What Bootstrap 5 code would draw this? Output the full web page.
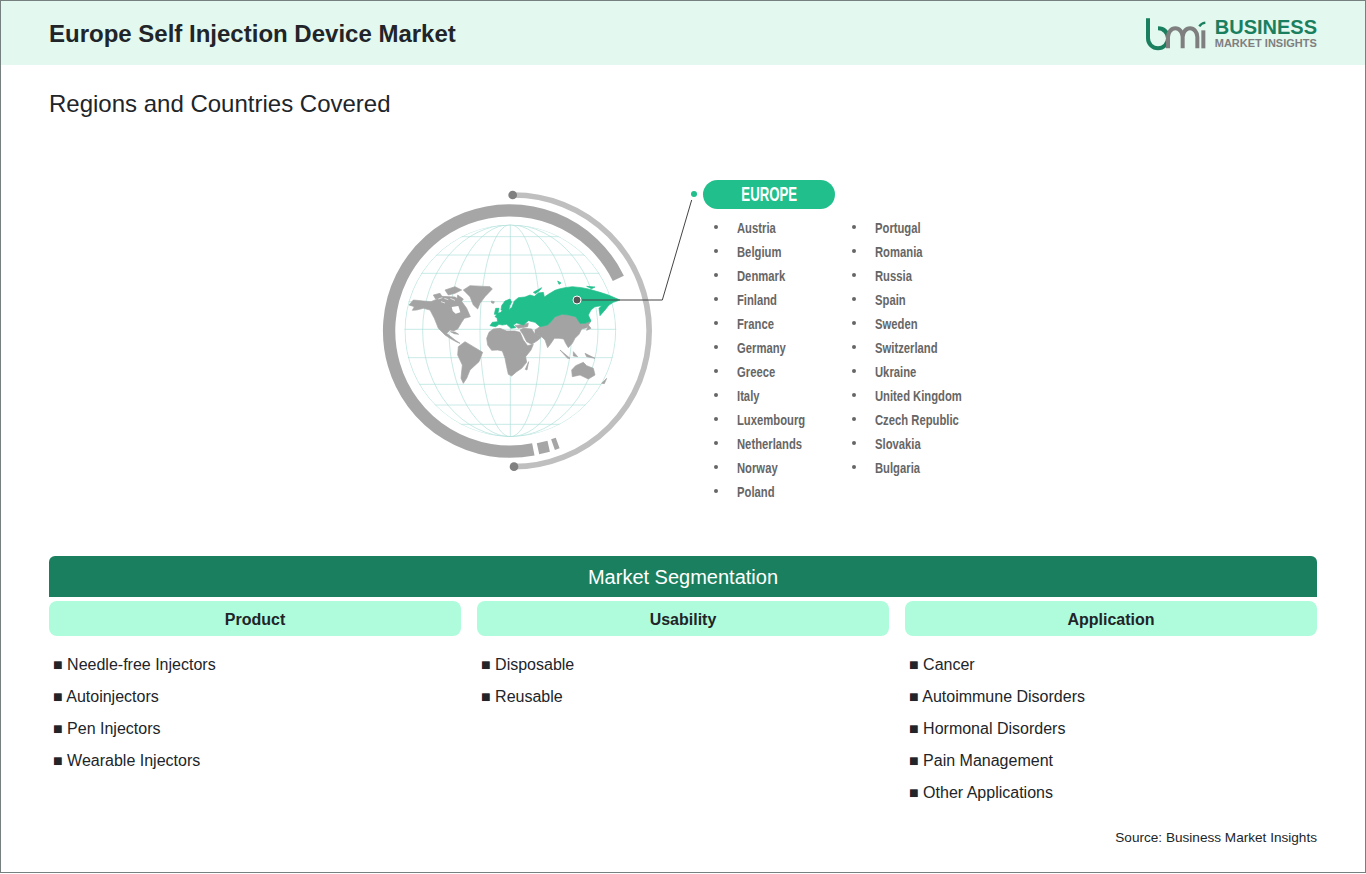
<!DOCTYPE html>
<html lang="en">
  <head>
    <meta charset="UTF-8" />
    <meta name="viewport" content="width=device-width, initial-scale=1.0" />
    <title>Europe Self Injection Device Market</title>
    <link href="https://cdn.jsdelivr.net/npm/bootstrap@5.3.3/dist/css/bootstrap.min.css" rel="stylesheet" />
    <script src="https://cdn.jsdelivr.net/npm/bootstrap@5.3.3/dist/js/bootstrap.bundle.min.js"></script>

    <style>
      body {
        margin: 0;
        font-family: "Liberation Sans", Arial, sans-serif;
        color: #212529;
        background: #fff;
      }
      .frame {
        width: 1366px;
        height: 873px;
        border: 1px solid #76807f;
        overflow: hidden;
      }
      .top-band {
        height: 64px;
        padding: 0 48px;
        background: #e3f8ef;
      }
      .top-band h1 {
        margin: 2px 0 0;
        font-size: 24px;
        font-weight: 700;
      }
      .bmi-mark {
        width: 70px;
        height: 45px;
        margin-right: 5px;
      }
      .bmi-name {
        font-size: 20px;
        line-height: 20px;
        font-weight: 700;
        color: #1a7f5e;
      }
      .bmi-sub {
        font-size: 11px;
        line-height: 12px;
        font-weight: 700;
        color: #7f7f7f;
      }
      .body-wrap {
        padding: 0 48px;
      }
      .region-title {
        margin: 24px 0 0;
        font-size: 24px;
        line-height: 29px;
        font-weight: 400;
      }
      .region-map {
        margin-top: 57px;
        padding-left: 321px;
        height: 381px;
      }
      .globe {
        width: 330px;
        height: 300px;
        margin-right: 3px;
      }
      .region-pill {
        width: 132px;
        height: 29px;
        margin-top: 5px;
        border-radius: 15px;
        background: #21bf8c;
        color: #fff;
        font-size: 20px;
        line-height: 29px;
        font-weight: 700;
        text-align: center;
      }
      .narrow-pill {
        display: inline-block;
        transform: scaleX(0.66);
      }
      .country-cols {
        margin-top: 7px;
      }
      .country-col {
        width: 138px;
        margin: 0;
        padding: 0;
        list-style: none;
      }
      .country-col li {
        position: relative;
        height: 24px;
        padding-left: 33.5px;
        font-size: 15px;
        line-height: 23px;
        font-weight: 700;
        color: #666;
        white-space: nowrap;
      }
      .country-col li span {
        display: inline-block;
        transform: scaleX(0.75);
        transform-origin: left center;
      }
      .country-col li::before {
        content: "";
        position: absolute;
        left: 11px;
        top: 9px;
        width: 4px;
        height: 4px;
        border-radius: 50%;
        background: #666;
      }
      .seg-head {
        height: 41px;
        border-radius: 6px 6px 0 0;
        background: #1a7f5e;
        color: #fff;
        font-size: 20px;
        line-height: 43px;
        text-align: center;
      }
      .seg-cols {
        display: grid;
        grid-template-columns: repeat(3, 412px);
        gap: 16px;
        margin-top: 4px;
      }
      .seg-tile {
        height: 35px;
        border-radius: 8px;
        background: #aefcdb;
        font-size: 16px;
        line-height: 37px;
        font-weight: 700;
        text-align: center;
      }
      .seg-list {
        margin: 13px 0 0;
        padding: 0 0 0 4px;
        list-style: none;
        font-size: 16px;
        line-height: 32px;
      }
      .source-line {
        margin-top: 19px;
        font-size: 13.6px;
        line-height: 20px;
        text-align: right;
      }
    </style>
  </head>
  <body>
    <div class="frame">
      <header class="top-band d-flex align-items-center justify-content-between">
        <h1>Europe Self Injection Device Market</h1>
        <div class="d-flex align-items-center">
          <svg class="bmi-mark" viewBox="0 0 210 135" aria-hidden="true">
            <g fill="none" stroke-width="12">
              <path stroke="#1a7f5e" d="M24 22V82a30 30 0 1 0 30-30c18 0 30 10 30 30" />
              <path stroke="#7f7f7f" d="M84 112V78a22 26 0 0 1 44 0V112M128 78a22 26 0 0 1 44 0V112" />
              <path stroke="#7f7f7f" d="M190 58V112" />
              <path stroke="#1a7f5e" stroke-width="7" d="M178 46c4-7 11-10 18-11" />
            </g>
          </svg>
          <div>
            <div class="bmi-name">BUSINESS</div>
            <div class="bmi-sub">MARKET INSIGHTS</div>
          </div>
        </div>
      </header>

      <main class="body-wrap">
        <h2 class="region-title">Regions and Countries Covered</h2>

        <section class="region-map d-flex align-items-start">
          <svg class="globe" viewBox="0 0 990 900" aria-hidden="true">
            <defs>
              <clipPath id="globeClip"><circle cx="421" cy="467" r="318" /></clipPath>
            </defs>
            <!-- grid -->
            <g fill="none" stroke="#aee0d9" stroke-width="2" clip-path="url(#globeClip)">
              <ellipse cx="421" cy="467" rx="316" ry="318" />
              <ellipse cx="421" cy="467" rx="263" ry="318" />
              <ellipse cx="421" cy="467" rx="184" ry="318" />
              <ellipse cx="421" cy="467" rx="91" ry="318" />
              <path d="M421 149V785M90 185H750M90 240H750M90 295H750M90 380H750M90 463H750M90 548H750M90 628H750M90 690H750M90 748H750" />
            </g>

            <!-- rings -->
            <g fill="none">
              <path stroke="#bfbfbf" stroke-width="17" d="M430 60A407 407 0 0 1 430 875" />
              <path stroke="#a6a6a6" stroke-width="37" d="M745 310A362 362 0 1 0 490 823" />
              <path stroke="#a6a6a6" stroke-width="34" d="M504 821L536 814M549 809L563 804" />
            </g>
            <circle cx="428" cy="60" r="13" fill="#808080" />
            <circle cx="432" cy="875" r="13" fill="#808080" />

            <!-- americas -->
            <g transform="translate(105 300)" fill="#a3a3a3" stroke="#a3a3a3" stroke-width="2" stroke-linejoin="round">
              <path d="M12 90L25 75 55 78 78 80 92 74 110 64 150 66 172 82 185 100 196 125 178 130 170 142 158 162 145 168 135 165 125 175 150 195 165 205 155 201 135 190 120 180 100 160 88 130 75 105 55 100 35 105 22 106 28 95Z" />
              <path fill="#fff" stroke="none" d="M140 96L160 93 166 112 152 116 143 108Z" />
              <path d="M85 60L105 55 112 66 92 72ZM120 45L150 35 170 45 150 55 130 60ZM158 60L175 72 168 82 156 72ZM136 170L150 171 161 178 148 176Z" />
              <path fill="none" stroke="#fff" stroke-width="2" d="M100 72L112 68M118 70L130 74M136 70L150 76M108 80L120 84" />
              <path d="M175 45L195 32 255 35 262 42 240 65 225 85 218 102 205 90 195 65Z" />
              <path d="M160 215L180 200 205 215 233 232 222 260 195 285 185 310 175 325 168 310 172 270 158 240Z" />
              <path d="M259 78L268 80 266 85 260 84Z" />
            </g>

            <!-- old world -->
            <g transform="translate(345 300)" stroke-width="2" stroke-linejoin="round">
              <g fill="#a3a3a3" stroke="#a3a3a3">
                <path d="M5 190L12 172 25 162 45 160 65 168 90 168 105 172 115 195 128 212 145 208 138 225 122 245 125 262 110 280 95 290 80 303 70 298 65 275 60 250 52 228 38 225 20 226 8 210Z" />
                <path d="M121 283L131 260 126 285Z" />
                <path d="M105 165L115 160 140 162 150 178 170 185 160 195 140 208 125 200 115 180Z" />
                <path d="M90 152L130 145 128 155 100 160Z" />
                <path d="M150 165L165 155 188 150 198 140 210 125 232 118 250 120 272 125 285 145 300 145 318 138 305 158 290 162 282 178 270 190 262 205 250 218 242 205 236 192 222 190 208 190 198 205 188 218 180 195 170 185 150 178Z" />
                <path d="M260 285L272 272 295 262 305 272 325 280 330 300 310 312 285 300 262 305Z" />
                <path d="M365 310L350 325 358 326Z" />
                <path d="M225 225L255 250 248 250Z" />
                <path d="M265 230L278 245 265 243Z" />
                <path d="M300 235L330 250 305 245Z" />
                <path d="M310 150L318 160 305 166Z" />
              </g>
              <g fill="#21bf8c" stroke="#21bf8c">
                <path d="M15 152L22 142 38 140 36 128 30 125 38 115 48 112 52 105 48 105 50 92 60 78 75 72 80 82 74 92 72 104 80 98 88 78 100 68 120 66 135 60 148 64 160 54 175 52 178 66 190 58 210 46 222 42 240 38 262 35 290 38 310 42 345 52 370 60 405 75 385 82 372 90 360 105 345 122 342 100 350 92 330 95 318 105 310 120 318 138 300 145 285 145 272 125 250 120 232 118 210 125 198 140 188 150 165 155 150 142 130 137 115 150 95 144 85 150 92 158 78 160 65 148 52 150 42 148 32 155Z" />
                <path d="M32 100L42 100 38 118 28 118Z" />
                <path d="M145 52L170 38 165 45 152 56Z" />
                <path d="M218 18L228 24 222 28Z" />
                <path d="M305 34L330 36 320 41Z" />
              </g>
            </g>

            <!-- callout -->
            <path fill="none" stroke="#444" stroke-width="3" d="M635 375H877L965 75" />
            <circle cx="621" cy="375" r="12" fill="#555" stroke="#fff" stroke-width="3" />
            <circle cx="972" cy="57" r="9" fill="#21bf8c" />
          </svg>

          <div>
            <div class="region-pill"><span class="narrow-pill">EUROPE</span></div>
            <div class="country-cols d-flex">
              <ul class="country-col">
                <li><span>Austria</span></li>
                <li><span>Belgium</span></li>
                <li><span>Denmark</span></li>
                <li><span>Finland</span></li>
                <li><span>France</span></li>
                <li><span>Germany</span></li>
                <li><span>Greece</span></li>
                <li><span>Italy</span></li>
                <li><span>Luxembourg</span></li>
                <li><span>Netherlands</span></li>
                <li><span>Norway</span></li>
                <li><span>Poland</span></li>
              </ul>
              <ul class="country-col">
                <li><span>Portugal</span></li>
                <li><span>Romania</span></li>
                <li><span>Russia</span></li>
                <li><span>Spain</span></li>
                <li><span>Sweden</span></li>
                <li><span>Switzerland</span></li>
                <li><span>Ukraine</span></li>
                <li><span>United Kingdom</span></li>
                <li><span>Czech Republic</span></li>
                <li><span>Slovakia</span></li>
                <li><span>Bulgaria</span></li>
              </ul>
            </div>
          </div>
        </section>

        <section>
          <div class="seg-head">Market Segmentation</div>
          <div class="seg-cols">
            <div>
              <div class="seg-tile">Product</div>
              <ul class="seg-list">
                <li>■ Needle-free Injectors</li>
                <li>■ Autoinjectors</li>
                <li>■ Pen Injectors</li>
                <li>■ Wearable Injectors</li>
              </ul>
            </div>
            <div>
              <div class="seg-tile">Usability</div>
              <ul class="seg-list">
                <li>■ Disposable</li>
                <li>■ Reusable</li>
              </ul>
            </div>
            <div>
              <div class="seg-tile">Application</div>
              <ul class="seg-list">
                <li>■ Cancer</li>
                <li>■ Autoimmune Disorders</li>
                <li>■ Hormonal Disorders</li>
                <li>■ Pain Management</li>
                <li>■ Other Applications</li>
              </ul>
            </div>
          </div>
          <div class="source-line">Source: Business Market Insights</div>
        </section>
      </main>
    </div>
  </body>
</html>
